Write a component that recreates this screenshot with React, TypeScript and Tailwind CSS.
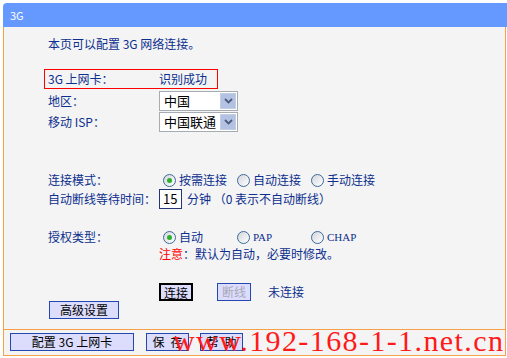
import React from 'react';

function Radio({ checked }: { checked?: boolean }) {
  return (
    <span className="flex h-[13px] w-[13px] shrink-0 items-center justify-center rounded-full border border-[#3d6a9a] bg-gradient-to-br from-[#d4d6dc] to-white">
      {checked && <span className="h-[5px] w-[5px] rounded-full bg-[#2cb02c]" />}
    </span>
  );
}

function Option({ checked, label, serif }: { checked?: boolean; label: string; serif?: boolean }) {
  return (
    <div className="flex w-[74px] items-center">
      <Radio checked={checked} />
      <span
        className={
          serif
            ? "ml-[3px] font-['Liberation_Serif',serif] text-[11px] leading-[14px]"
            : 'ml-[3px]'
        }
      >
        {label}
      </span>
    </div>
  );
}

function Select({ value }: { value: string }) {
  return (
    <div className="flex h-[20px] w-[79px] border border-[#a5acb2] bg-white">
      <span className="flex-1 pl-[4px] text-[13px] leading-[18px] text-black">{value}</span>
      <span className="m-[1px] flex w-[16px] items-center justify-center border border-[#c3cde4] bg-[#b3c2e2]">
        <svg width="9" height="6" viewBox="0 0 9 6">
          <path d="M1 1l3.5 3.5L8 1" fill="none" stroke="#4b5a78" strokeWidth="1.8" />
        </svg>
      </span>
    </div>
  );
}

function Btn({ children, className = '' }: { children: React.ReactNode; className?: string }) {
  return (
    <button className={`h-[18px] bg-[#dcdcfc] text-[12px] leading-[16px] ${className}`}>
      {children}
    </button>
  );
}

export default function App() {
  return (
    <div className="relative h-[358px] w-[507px] overflow-hidden bg-white pt-[3px] font-['Noto_Sans_CJK_SC','Liberation_Sans',sans-serif] text-[12px] leading-[14px] text-[#0d2f8e]">
      {/* Header */}
      <div className="ml-[3px] flex h-[24px] items-center rounded-tl-[4px] bg-[#6699ff] pl-[7px] text-[11px] text-white">
        3G
      </div>

      {/* Body */}
      <div className="ml-[3px] h-[302px] w-[503px] border-x border-[#f7a048] bg-[#f4f4f4] pl-[44px] pt-[10px]">
        <div className="h-[14px]">本页可以配置 3G 网络连接。</div>

        <div className="ml-[-4px] mt-[18px] grid h-[20px] w-[174px] grid-cols-[111px_1fr] items-center border border-[#ff0000] pl-[3px]">
          <span>3G 上网卡：</span>
          <span>识别成功</span>
        </div>

        <div className="mt-[2px] grid h-[20px] grid-cols-[111px_1fr] items-center">
          <span>地区：</span>
          <Select value="中国" />
        </div>
        <div className="mt-[1px] grid h-[20px] grid-cols-[111px_1fr] items-center">
          <span>移动 ISP：</span>
          <Select value="中国联通" />
        </div>

        <div className="mt-[40px] grid h-[16px] grid-cols-[115px_1fr] items-center">
          <span>连接模式：</span>
          <div className="flex">
            <Option checked label="按需连接" />
            <Option label="自动连接" />
            <Option label="手动连接" />
          </div>
        </div>

        <div className="mt-[1px] grid h-[20px] grid-cols-[111px_1fr] items-center">
          <span>自动断线等待时间：</span>
          <div className="flex items-center">
            <span className="h-[20px] w-[23px] border border-[#24357a] bg-white pl-[3px] text-[13px] leading-[18px] text-black">
              15
            </span>
            <span className="ml-[5px]">分钟 （0 表示不自动断线）</span>
          </div>
        </div>

        <div className="mt-[20px] grid h-[16px] grid-cols-[115px_1fr] items-center">
          <span>授权类型：</span>
          <div className="flex">
            <Option checked label="自动" />
            <Option label="PAP" serif />
            <Option label="CHAP" serif />
          </div>
        </div>

        <div className="mt-[2px] grid h-[14px] grid-cols-[111px_1fr]">
          <span />
          <span>
            <span className="text-[#ff0000]">注意</span>：默认为自动，必要时修改。
          </span>
        </div>

        <div className="mt-[22px] grid h-[18px] grid-cols-[111px_1fr] items-center">
          <span />
          <div className="flex items-center">
            <Btn className="w-[34px] border-2 border-black text-black">连接</Btn>
            <Btn className="ml-[24px] w-[34px] border border-[#2447b1] text-[#a8a8b8]">断线</Btn>
            <span className="ml-[17px]">未连接</span>
          </div>
        </div>

        <Btn className="ml-[1px] w-[70px] border border-[#2447b1] text-black">高级设置</Btn>
      </div>

      {/* Footer */}
      <div className="ml-[3px] flex h-[27px] w-[503px] items-start border border-[#f7a048] bg-[#f4f4f4] pl-[6px] pt-[3px]">
        <Btn className="w-[124px] border border-[#2447b1] text-black">配置 3G 上网卡</Btn>
        <Btn className="ml-[12px] w-[43px] border border-[#2447b1] text-black">
          保<span className="ml-[6px]">存</span>
        </Btn>
        <Btn className="ml-[11px] w-[43px] border border-[#2447b1] text-black">
          帮<span className="ml-[6px]">助</span>
        </Btn>
      </div>

      {/* Watermark */}
      <div className="absolute left-[173px] top-[326px] whitespace-nowrap font-['Liberation_Serif',serif] text-[30px] leading-[30px] tracking-[1.4px] text-[#ff1a1a]">
        www.192-168-1-1.net.cn
      </div>
    </div>
  );
}
